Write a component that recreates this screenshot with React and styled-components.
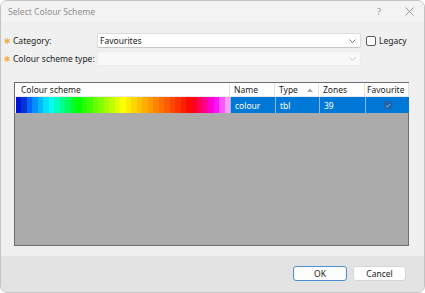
import React from "react";
import styled, { createGlobalStyle } from "styled-components";

const GlobalStyle = createGlobalStyle`
  html, body { margin: 0; padding: 0; background: #ffffff; }
  body { font-family: "Noto Sans", "Open Sans", sans-serif; font-size: 8.5px; color: #1b1b1b; }
  * { box-sizing: border-box; }
`;

function buildGradient(n) {
  const pts = [
    [0, 240],
    [0.16, 180],
    [0.29, 120],
    [0.5, 60],
    [0.82, 0],
    [0.93, -60],
    [1, -60],
  ];
  const hueAt = (t) => {
    for (let k = 0; k < pts.length - 1; k++) {
      const [a, ha] = pts[k];
      const [b, hb] = pts[k + 1];
      if (t >= a && t <= b) return ha + ((t - a) / (b - a)) * (hb - ha);
    }
    return -60;
  };
  const stops = [];
  for (let i = 0; i < n; i++) {
    const t = (i + 0.5) / n;
    let h = hueAt(t);
    if (h < 0) h += 360;
    let l = 50;
    if (t < 0.06) l = 42;
    if (t > 0.93) l = 50 + ((t - 0.93) / 0.07) * 38;
    const c = `hsl(${h.toFixed(1)}, 100%, ${l.toFixed(1)}%)`;
    stops.push(`${c} ${((i / n) * 100).toFixed(2)}%`, `${c} ${(((i + 1) / n) * 100).toFixed(2)}%`);
  }
  return `linear-gradient(to right, ${stops.join(", ")})`;
}

const SCHEME_GRADIENT = buildGradient(39);

const Window = styled.div`
  width: 425px;
  height: 293px;
  display: flex;
  flex-direction: column;
  background: #f0f0f0;
  border: 1px solid #c4c4c4;
  border-radius: 7px;
  overflow: hidden;
`;

const TitleBar = styled.div`
  height: 21px;
  display: flex;
  align-items: center;
  padding-left: 7px;
  background: #f3f3f3;
  color: #8e8e8e;
  font-size: 8.6px;
`;

const TitleText = styled.span`
  flex: 1;
`;

const TitleButton = styled.div`
  width: 30px;
  height: 21px;
  display: flex;
  align-items: center;
  justify-content: center;
  color: #9a9a9a;
  font-size: 9.5px;
`;

const Body = styled.div`
  flex: 1;
  display: flex;
  flex-direction: column;
  padding: 11px 15px 10px 3px;
`;

const Form = styled.div`
  display: grid;
  grid-template-columns: 93px 264px auto;
  grid-auto-rows: 15px;
  row-gap: 3px;
  align-items: center;
`;

const Label = styled.div`
  display: flex;
  align-items: center;
  gap: 3px;
  white-space: nowrap;
`;

const Combo = styled.div`
  height: 15px;
  display: flex;
  align-items: center;
  padding: 0 4px 0 2px;
  background: ${(p) => (p.$disabled ? "#f8f8f8" : "#ffffff")};
  border: 1px solid ${(p) => (p.$disabled ? "#ececec" : "#dcdcdc")};
  border-bottom-color: ${(p) => (p.$disabled ? "#ececec" : "#c8c8c8")};
  border-radius: 2px;
`;

const ComboText = styled.span`
  flex: 1;
`;

const LegacyWrap = styled.label`
  display: flex;
  align-items: center;
  gap: 3px;
  margin-left: 5px;
`;

const CheckBox = styled.span`
  width: 10px;
  height: 10px;
  border: 1px solid #5a5a5a;
  border-radius: 2px;
  background: #ffffff;
`;

const Table = styled.div`
  margin: 16px 0 0 10px;
  height: 164px;
  border: 1px solid #6e6e6e;
  background: #ababab;
  display: flex;
  flex-direction: column;
`;

const Row = styled.div`
  display: grid;
  grid-template-columns: 215px 45px 44px 46px 44px;
  height: ${(p) => p.$h}px;
`;

const HeadCell = styled.div`
  display: flex;
  align-items: center;
  padding-left: ${(p) => p.$pl ?? 4}px;
  background: #ffffff;
  border-right: 1px solid #e3e3e3;
  border-bottom: 1px solid #e8e8e8;
  color: #1b1b1b;
  white-space: nowrap;
  position: relative;
`;

const SortArrow = styled.svg`
  position: absolute;
  right: 5px;
  top: 5px;
`;

const Cell = styled.div`
  display: flex;
  align-items: center;
  justify-content: ${(p) => (p.$center ? "center" : "flex-start")};
  padding-left: ${(p) => (p.$center ? 0 : 4)}px;
  background: #0078d7;
  color: #ffffff;
  border-left: 1px solid #8fb8e2;
`;

const GradientCell = styled.div`
  border-left: 1px solid #ffffff;
  background: ${SCHEME_GRADIENT};
`;

const FavBox = styled.span`
  width: 8px;
  height: 8px;
  border-radius: 1px;
  background: #1f63ad;
  display: flex;
  align-items: center;
  justify-content: center;
`;

const Footer = styled.div`
  height: 36px;
  display: flex;
  align-items: center;
  justify-content: flex-end;
  gap: 6px;
  padding: 0 18px 2px 0;
  background: #e3e3e3;
`;

const Button = styled.button`
  width: ${(p) => p.$w}px;
  height: 15px;
  padding: 0;
  font-family: inherit;
  font-size: 8.5px;
  color: #1b1b1b;
  background: #fdfdfd;
  border: 1px solid ${(p) => (p.$primary ? "#4c8fd2" : "#d6d6d6")};
  border-radius: 3px;
`;

const Asterisk = () => (
  <svg width="6" height="6" viewBox="0 0 6 6">
    <g stroke="#f2a93b" strokeWidth="1.2" strokeLinecap="round">
      <line x1="3" y1="0.5" x2="3" y2="5.5" />
      <line x1="0.8" y1="1.7" x2="5.2" y2="4.3" />
      <line x1="0.8" y1="4.3" x2="5.2" y2="1.7" />
    </g>
  </svg>
);

const Chevron = ({ color }) => (
  <svg width="7" height="4" viewBox="0 0 7 4">
    <polyline points="0.5,0.5 3.5,3.5 6.5,0.5" fill="none" stroke={color} strokeWidth="0.9" />
  </svg>
);

export default function App() {
  return (
    <>
      <GlobalStyle />
      <Window>
        <TitleBar>
          <TitleText>Select Colour Scheme</TitleText>
          <TitleButton>?</TitleButton>
          <TitleButton>
            <svg width="9" height="9" viewBox="0 0 9 9">
              <g stroke="#8e8e8e" strokeWidth="0.9">
                <line x1="0.5" y1="0.5" x2="8.5" y2="8.5" />
                <line x1="8.5" y1="0.5" x2="0.5" y2="8.5" />
              </g>
            </svg>
          </TitleButton>
        </TitleBar>
        <Body>
          <Form>
            <Label>
              <Asterisk />
              Category:
            </Label>
            <Combo>
              <ComboText>Favourites</ComboText>
              <Chevron color="#6a6a6a" />
            </Combo>
            <LegacyWrap>
              <CheckBox />
              Legacy
            </LegacyWrap>
            <Label>
              <Asterisk />
              Colour scheme type:
            </Label>
            <Combo $disabled>
              <ComboText />
              <Chevron color="#c8c8c8" />
            </Combo>
            <span />
          </Form>
          <Table>
            <Row $h={14}>
              <HeadCell $pl={6}>Colour scheme</HeadCell>
              <HeadCell>Name</HeadCell>
              <HeadCell>
                Type
                <SortArrow width="6" height="4" viewBox="0 0 6 4">
                  <polygon points="0,4 3,0.5 6,4" fill="#a8a8a8" />
                </SortArrow>
              </HeadCell>
              <HeadCell>Zones</HeadCell>
              <HeadCell $pl={2}>Favourite</HeadCell>
            </Row>
            <Row $h={16}>
              <GradientCell />
              <Cell>colour</Cell>
              <Cell>tbl</Cell>
              <Cell>39</Cell>
              <Cell $center>
                <FavBox>
                  <svg width="6" height="5" viewBox="0 0 6 5">
                    <polyline points="0.8,2.6 2.3,4 5.2,1" fill="none" stroke="#9cc3ec" strokeWidth="0.9" />
                  </svg>
                </FavBox>
              </Cell>
            </Row>
          </Table>
        </Body>
        <Footer>
          <Button $w={54} $primary>OK</Button>
          <Button $w={53}>Cancel</Button>
        </Footer>
      </Window>
    </>
  );
}
